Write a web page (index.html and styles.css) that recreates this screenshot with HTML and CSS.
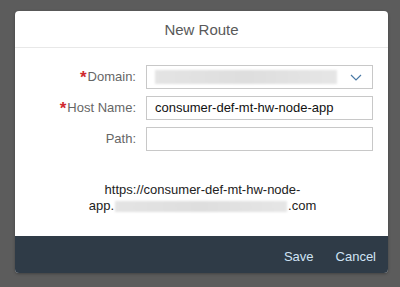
FILE: index.html
```html
<!DOCTYPE html>
<html>
<head>
<meta charset="utf-8">
<link rel="stylesheet" href="styles.css">
</head>
<body>
<div class="dialog">
  <div class="header">New Route</div>
  <div class="content">
    <div class="form">
      <label class="label"><span class="req">*</span>Domain:</label>
      <div class="field select">
        <span class="blur blur-domain"></span>
        <svg class="chev" width="12" height="7" viewBox="0 0 12 7"><path d="M1 1 L6 6 L11 1" fill="none" stroke="#4a7aa6" stroke-width="1.2"/></svg>
      </div>
      <label class="label"><span class="req">*</span>Host Name:</label>
      <div class="field">consumer-def-mt-hw-node-app</div>
      <label class="label">Path:</label>
      <div class="field"></div>
    </div>
    <div class="url">
      <div>https://consumer-def-mt-hw-node-</div>
      <div class="line2">app.<span class="blur blur-url"></span>.com</div>
    </div>
  </div>
  <div class="footer">
    <span class="btn">Save</span>
    <span class="btn">Cancel</span>
  </div>
</div>
</body>
</html>
```
FILE: styles.css
```css
html, body { margin: 0; padding: 0; }
body {
  width: 400px;
  height: 287px;
  background: #5c5c5c;
  font-family: "Liberation Sans", Arial, sans-serif;
  overflow: hidden;
  padding-top: 11px;
  box-sizing: border-box;
}
.dialog {
  margin-left: 15px;
  width: 373px;
  height: 262px;
  background: #fff;
  border-radius: 4px;
  overflow: hidden;
  display: flex;
  flex-direction: column;
  box-shadow: 0 1px 3px rgba(0,0,0,0.3);
}
.header {
  height: 37px;
  border-bottom: 1px solid #e8e8e8;
  display: flex;
  align-items: center;
  justify-content: center;
  font-size: 15px;
  color: #595959;
  padding-top: 1px;
  box-sizing: border-box;
}
.content {
  flex: 1;
  padding-top: 17px;
}
.form {
  display: grid;
  grid-template-columns: 121px 227px;
  column-gap: 10px;
  row-gap: 6px;
}
.label {
  text-align: right;
  font-size: 13px;
  color: #666;
  line-height: 24px;
}
.req {
  color: #d0282f;
  font-size: 17px;
  font-weight: bold;
  vertical-align: -2px;
  margin-right: 1px;
}
.field {
  height: 24px;
  border: 1px solid #c8c8c8;
  box-sizing: border-box;
  font-size: 13px;
  color: #111;
  padding-left: 8px;
  line-height: 22px;
  display: flex;
  align-items: center;
}
.select { justify-content: space-between; padding-right: 10px; }
.blur {
  display: inline-block;
  background: linear-gradient(90deg, #e4e4e4, #dedede 50%, #e6e6e6);
  filter: blur(0.8px);
}
.blur-domain { width: 182px; height: 14px; }
.url {
  margin-top: 31px;
  text-align: center;
  font-size: 13px;
  color: #222;
  line-height: 16px;
  padding-left: 2px;
}
.line2 { display: flex; justify-content: center; align-items: center; }
.blur-url { width: 172px; height: 11px; margin: 0 1px; }
.footer {
  height: 37px;
  background: #2f3b47;
  display: flex;
  justify-content: flex-end;
  align-items: center;
  gap: 22px;
  padding-right: 12px;
  padding-top: 4px;
  box-sizing: border-box;
}
.btn {
  color: #cfe3f5;
  font-size: 13px;
}
```
